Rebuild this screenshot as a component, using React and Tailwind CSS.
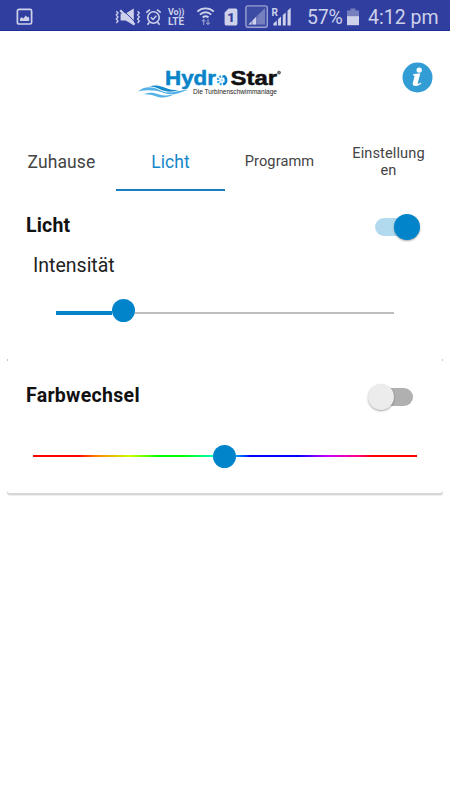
import React, { useState } from "react";

const TABS = ["Zuhause", "Licht", "Programm", "Einstellungen"];

const StatusBar = () => (
  <div className="flex h-[31px] items-center border-b border-[#1c2f94] bg-[#303f9f] pt-[3px] text-[#cdd1ea]">
    {/* Screenshot saved */}
    <svg className="ml-4 h-[18px] w-[18px]" viewBox="0 0 18 18">
      <rect x="1.4" y="1.4" width="14.2" height="14.6" rx="1.6" fill="none" stroke="currentColor" strokeWidth="1.7" />
      <path d="M4 13V10.6l1.8-1.4 1.6 1.2 2.4-2.9 1.4 1.8 1-.7 1 1.3V13z" fill="currentColor" />
    </svg>

    {/* Vibrate / muted */}
    <svg className="ml-[81px] h-[18px] w-[26px]" viewBox="0 0 26 18">
      <path d="M5.6 5.600h5l8.200-5v16.600l-8.200-4.600h-5z" fill="currentColor" />
      <path d="M7.400 1.600 20.400 14.200" stroke="#303f9f" strokeWidth="1" />
      <path d="M5.200 2.200 19.600 16.600" stroke="currentColor" strokeWidth="2.200" />
      <path
        d="M1.3 3.2 3 5 1.3 7 3 9l-1.7 2L3 13l-1.7 2M22.6 3.2 24.3 5l-1.7 2 1.7 2-1.7 2 1.7 2-1.7 2"
        fill="none"
        stroke="currentColor"
        strokeWidth="1.3"
      />
    </svg>

    {/* Alarm */}
    <svg className="ml-1 h-[18px] w-[17px]" viewBox="0 0 17 18" fill="none" stroke="currentColor">
      <circle cx="8.5" cy="9.5" r="5.7" strokeWidth="1.6" />
      <path d="M1.3 4.6 4.9 1.6M12.1 1.6l3.6 3M4.4 14.2l-2 2.6M12.6 14.2l2 2.6" strokeWidth="1.6" />
      <path d="m5.8 9.2 2.2 2.2 3.3-3.6" strokeWidth="1.4" />
    </svg>

    {/* VoLTE */}
    <div className="ml-[6px] flex w-[19px] flex-col font-['Roboto',sans-serif] font-bold leading-[9px]">
      <span className="text-[9px] tracking-[-0.2px]">Vo))</span>
      <span className="text-[10px]">LTE</span>
    </div>

    {/* Wifi with transfer arrows */}
    <svg className="ml-[9px] h-[20px] w-[20px]" viewBox="0 0 20 20" fill="none" stroke="currentColor">
      <path d="M1.400 4.600a12 12 0 0 1 16.400 0" strokeWidth="1.9" />
      <path d="M4 7.600a8 8 0 0 1 11.200 0" strokeWidth="1.9" />
      <path d="M6.700 10.400a4.600 4.600 0 0 1 5.800 0" strokeWidth="1.9" />
      <path d="M7.600 18v-5.500M5.800 14.400l1.800-1.900 1.800 1.900M12 12v5.500M10.200 15.600l1.800 1.900 1.800-1.900" strokeWidth="1.200" opacity=".6" />
    </svg>

    {/* SIM 1 */}
    <svg className="ml-2 h-[18px] w-[14px]" viewBox="0 0 14 18">
      <path d="M4.600.600h7.200A1.600 1.600 0 0 1 13.400 2.200v13.600a1.600 1.600 0 0 1-1.600 1.600H2.200A1.600 1.600 0 0 1 .600 15.800V4.600z" fill="currentColor" />
      <text x="7" y="13.500" textAnchor="middle" fontFamily="Roboto, sans-serif" fontWeight="900" fontSize="13" fill="#303f9f">1</text>
    </svg>

    {/* Signal, active SIM */}
    <svg className="ml-[7px] h-6 w-6" viewBox="0 0 24 24">
      <rect x=".9" y=".9" width="21.400" height="21.400" rx="2" fill="#5261b0" fillOpacity=".35" stroke="#9aa1d2" strokeWidth="1.4" />
      <path d="M3.500 19.500 20 3v16.500z" fill="#7780bf" />
      <path d="M3.500 19.500 11.500 11.500v8z" fill="currentColor" />
      <path d="M7 15v5M11.800 10v10" stroke="#4f5cae" strokeWidth=".8" />
    </svg>

    {/* Signal, roaming */}
    <svg className="ml-[2px] h-[20px] w-[20px]" viewBox="0 0 20 20">
      <text x=".5" y="8.500" fontFamily="Roboto, sans-serif" fontWeight="700" fontSize="10" fill="currentColor">R</text>
      <path d="M2.400 18.500v-2l3.400-3v5zM7 18.500v-6.300l3-2.700v9zM11.800 18.500V8l2.900-2.500v13zM16.500 18.500V3.700l3.200-3v17.800z" fill="currentColor" />
    </svg>

    <span className="ml-[16px] mt-[2px] w-[38px] whitespace-nowrap font-['Roboto',sans-serif] text-[19.500px] leading-none tracking-[-0.2px]">57%</span>

    {/* Battery */}
    <svg className="ml-[2px] h-[18px] w-[12px]" viewBox="0 0 12 18">
      <path d="M3.600.500h4.800v2H12V9H0V2.500h3.600z" fill="#7780bf" />
      <rect y="8.200" width="12" height="9" fill="currentColor" />
    </svg>

    <span className="ml-[9px] mt-[2px] whitespace-nowrap font-['Roboto',sans-serif] text-[19.500px] leading-none">4:12 pm</span>
  </div>
);

const Logo = () => (
  <svg className="h-[36px] w-[146px] overflow-visible" viewBox="0 0 146 36">
    {/* Waves */}
    <path d="M0 26.500c4-4 10-5.200 15.500-3.800 6 1.500 8.500 4.400 14.500 4.600 7 .3 12-2.200 20-2.200-5 1-8.500 3.700-14.500 4.200-7 .5-11-2.600-17.500-3.600-6-.9-12-.8-18 .8z" fill="#55b2e6" />
    <path d="M11 21.600c5-2 10-1.200 14 .5 4.500 1.900 9 3.500 16 2.600-5 2.200-11.500 2.600-16 .9-4-1.500-7.500-4-14-4z" fill="#1689ca" />
    <path d="M5 29.400c6-2.800 11-1.800 15.500-.2 5 1.800 10 1.600 16-.2-5 3.100-11 4.400-16.500 2.900-4.500-1.300-9-2.900-15-2.500z" fill="#55b2e6" />
    <text x="27" y="20.200" fontFamily="Liberation Sans, sans-serif" fontWeight="700" fontSize="20.500" fill="#0a84c9" stroke="#0a84c9" strokeWidth=".5" textLength="51" lengthAdjust="spacingAndGlyphs">
      Hydr
    </text>
    {/* Turbine standing in for the o */}
    <g transform="translate(83.800 15.200)">
      <circle r="3.900" fill="none" stroke="#31a1dc" strokeWidth="2.400" strokeDasharray="1.800 1.260" />
      <path d="M1.500 -4.400a4.700 4.700 0 0 1 0 8.800" fill="none" stroke="#0a84c9" strokeWidth="2.200" />
      <circle r="1.300" fill="#a8d8f2" />
    </g>
    <text x="92.500" y="20.200" fontFamily="Liberation Sans, sans-serif" fontWeight="700" fontSize="20.500" fill="#111" stroke="#111" strokeWidth=".5" textLength="46.500" lengthAdjust="spacingAndGlyphs">
      Star
    </text>
    <circle cx="141" cy="7.600" r="1.500" fill="#777" stroke="#444" strokeWidth=".7" />
    <text x="55" y="29.400" fontFamily="Liberation Sans, sans-serif" fontSize="8" fill="#222" textLength="84" lengthAdjust="spacingAndGlyphs">
      Die Turbinenschwimmanlage
    </text>
  </svg>
);

const Header = () => (
  <header className="flex h-[101px] items-start justify-between pl-[138px] pr-[17px] pt-[31px]">
    <div className="pt-[3px]">
      <Logo />
    </div>
    <button aria-label="Info">
      <svg className="h-[31px] w-[31px]" viewBox="0 0 31 31">
        <circle cx="15.500" cy="15.500" r="15" fill="#329dd4" />
        <circle cx="17.200" cy="8.100" r="2.700" fill="#fff" />
        <path d="M11 12.600c2-.6 4.200-.9 7.300-1l-2.500 9.200c-.2.900.3 1.200 1.500.6l1.700-.9.400.8c-1.700 1.700-3.700 2.800-5.700 2.800-2.300 0-3.400-1.100-2.900-3l1.700-6.600c.2-.8-.2-1.200-1.500-1.100z" fill="#fff" />
      </svg>
    </button>
  </header>
);

const Switch = ({ checked, onChange }) => (
  <button
    role="switch"
    aria-checked={checked}
    onClick={() => onChange(!checked)}
    className={`flex h-[18px] w-[38px] items-center rounded-full ${
      checked ? "justify-end bg-[#b2daef]" : "justify-start bg-[#b0b0b0]"
    }`}
  >
    <span
      className={`h-[26px] w-[26px] shrink-0 rounded-full shadow-[0_1px_2px_rgba(0,0,0,0.35)] ${
        checked ? "translate-x-[7px] bg-[#0284ca]" : "-translate-x-[7px] bg-[#ececec]"
      }`}
    />
  </button>
);

// Bits of shadow that show where the rounded card corners meet
const CardSeam = () => (
  <div className="mx-[7px] flex h-[2px] justify-between">
    <span className="w-px bg-[#c4c4c4]" />
    <span className="w-px bg-[#c4c4c4]" />
  </div>
);

const App = () => {
  const [activeTab, setActiveTab] = useState("Licht");
  const [lightOn, setLightOn] = useState(true);
  const [colorChange, setColorChange] = useState(false);

  return (
    <div className="h-[800px] w-[450px] overflow-hidden bg-white font-['Roboto',sans-serif]">
      <StatusBar />
      <Header />

      {/* Tabs */}
      <nav className="mx-[7px] grid h-[59px] grid-cols-4">
        {TABS.map((tab) => (
          <button
            key={tab}
            onClick={() => setActiveTab(tab)}
            className={`flex items-center justify-center border-b-2 pt-[2px] ${
              activeTab === tab ? "border-[#1a7fc0] text-[#1487c9]" : "border-transparent text-[#444]"
            } ${
              tab === "Programm" || tab === "Einstellungen"
                ? "px-[17px] text-[14.600px] leading-[17px] tracking-[0.1px]"
                : "pl-[17px] pr-[17px] text-[17.500px] leading-5 tracking-[0.1px]"
            }`}
          >
            <span className="w-full break-all text-center">{tab}</span>
          </button>
        ))}
      </nav>

      {/* Light */}
      <section className="mx-[7px] h-[168px] rounded-[3px] bg-white pl-[19px] pr-[30px] pt-[22px]">
        <div className="flex h-[26px] items-center justify-between">
          <h2 className="text-[19.500px] font-bold leading-6 tracking-[0.200px] text-[#111]">Licht</h2>
          <div className="pt-[2px]">
            <Switch checked={lightOn} onChange={setLightOn} />
          </div>
        </div>
        <p className="ml-[7px] mt-[15px] text-[19.500px] leading-6 text-[#222]">Intensität</p>
        <div className="ml-[30px] mr-[19px] mt-5 flex h-6 items-center">
          <div className="mt-[5px] h-1 w-[56px] bg-[#0284ca]" />
          <div className="h-[23px] w-[23px] shrink-0 rounded-full bg-[#0284ca]" />
          <div className="mt-[5px] h-[2px] grow bg-[#bdbdbd]" />
        </div>
      </section>

      <CardSeam />

      {/* Color change */}
      <section className="mx-[7px] h-[132px] rounded-b-[3px] bg-white pl-[19px] pr-[30px] pt-[22px] shadow-[0_2px_0_#d6d6d6,0_3px_0_#efefef]">
        <div className="flex h-[26px] items-center justify-between">
          <h2 className="text-[19.500px] font-bold leading-6 tracking-[0.300px] text-[#111]">Farbwechsel</h2>
          <div className="pt-[2px]">
            <Switch checked={colorChange} onChange={setColorChange} />
          </div>
        </div>
        <div className="-mr-[4px] ml-[7px] mt-[35px] flex h-6 items-center">
          <div className="h-[2px] w-[179.500px] bg-[linear-gradient(90deg,#f00_0%,#f00_25%,#ff8a00_36%,#c8ff00_54%,#0f0_70%,#0f0_83%,#00ffb0_100%)]" />
          <div className="h-[23px] w-[23px] shrink-0 rounded-full bg-[#0284ca]" />
          <div className="h-[2px] grow bg-[linear-gradient(90deg,#00a0ff_0%,#00f_8%,#00f_34%,#c800ff_50%,#ff0090_67%,#f00_75%,#f00_100%)]" />
        </div>
      </section>
    </div>
  );
};

export default App;
